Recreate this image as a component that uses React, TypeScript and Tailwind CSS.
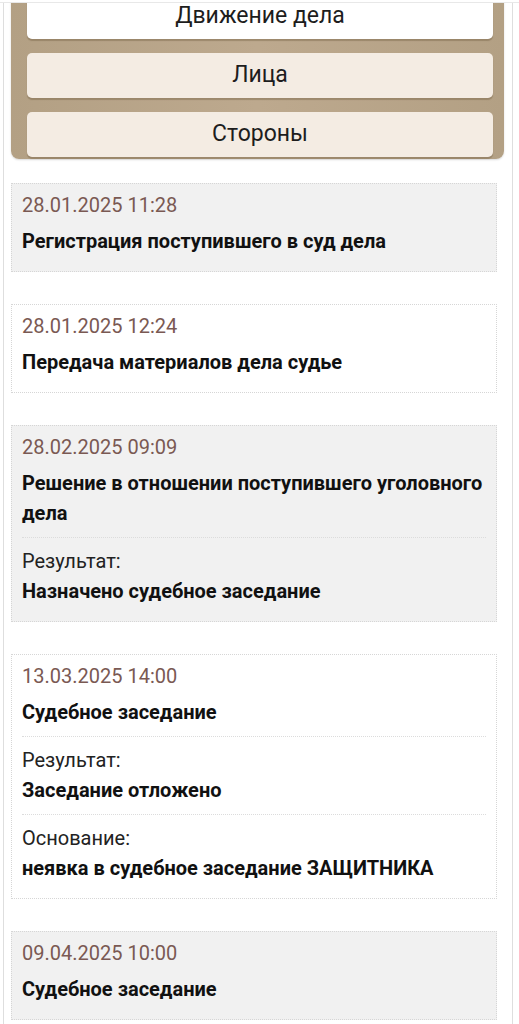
import React from "react";

type Row = { label: string; value: string };
type Event = { date: string; title: string; rows?: Row[] };

const tabs = [
  { name: "Движение дела", active: true },
  { name: "Лица", active: false },
  { name: "Стороны", active: false },
];

const events: Event[] = [
  { date: "28.01.2025 11:28", title: "Регистрация поступившего в суд дела" },
  { date: "28.01.2025 12:24", title: "Передача материалов дела судье" },
  {
    date: "28.02.2025 09:09",
    title: "Решение в отношении поступившего уголовного дела",
    rows: [{ label: "Результат:", value: "Назначено судебное заседание" }],
  },
  {
    date: "13.03.2025 14:00",
    title: "Судебное заседание",
    rows: [
      { label: "Результат:", value: "Заседание отложено" },
      { label: "Основание:", value: "неявка в судебное заседание ЗАЩИТНИКА" },
    ],
  },
  { date: "09.04.2025 10:00", title: "Судебное заседание" },
];

function TabPanel() {
  return (
    <div className="-mt-[14px] rounded-b-[8px] bg-gradient-to-r from-[#b3a084] via-[#bda98e] to-[#b3a084] pt-[5px] pb-[2px] pl-[16px] pr-[11px] shadow-[0_1px_2px_rgba(0,0,0,0.15)]">
      <div className="flex flex-col gap-[14px]">
        {tabs.map((t) => (
          <div
            key={t.name}
            className={
              t.active
                ? "flex h-[45px] items-center justify-center rounded-[5px] bg-white text-[23px] text-[#1d1d1d] shadow-[0_2px_1px_rgba(120,100,70,0.45)]"
                : "flex h-[45px] items-center justify-center rounded-[5px] bg-[#f4ece3] text-[23px] text-[#1d1d1d] shadow-[0_2px_1px_rgba(120,100,70,0.45)]"
            }
          >
            {t.name}
          </div>
        ))}
      </div>
    </div>
  );
}

function EventCard({ ev, shaded }: { ev: Event; shaded: boolean }) {
  return (
    <div
      className={
        shaded
          ? "border border-dotted border-[#d6d6d6] bg-[#f1f1f1] px-[10px] pt-[8px] pb-[15px]"
          : "border border-dotted border-[#d6d6d6] bg-white px-[10px] pt-[8px] pb-[15px]"
      }
    >
      <div className="text-[20px] leading-[26px] text-[#7a5953]">{ev.date}</div>
      <div className="mt-[8px] text-[20px] font-bold leading-[30px] text-[#111]">{ev.title}</div>
      {ev.rows?.map((r) => (
        <div key={r.label} className="mt-[9px] border-t border-dotted border-[#dcdcdc] pt-[8px]">
          <div className="text-[20px] leading-[30px] text-[#222]">{r.label}</div>
          <div className="text-[20px] font-bold leading-[30px] text-[#111]">{r.value}</div>
        </div>
      ))}
    </div>
  );
}

export default function App() {
  return (
    <div className="min-h-[1024px] bg-white font-['Roboto','Noto_Sans',sans-serif]">
      <div className="h-[3px] border-b border-[#e8e8e8]" />
      <div className="ml-[3px] mr-[6px] min-h-[1021px] overflow-hidden border-x border-[#dedede] pl-[7px] pr-[8px]">
        <TabPanel />
        <div className="mt-[24px] mr-[7px] flex flex-col gap-[32px] pb-[8px]">
          {events.map((ev, i) => (
            <EventCard key={ev.date} ev={ev} shaded={i % 2 === 0} />
          ))}
        </div>
      </div>
    </div>
  );
}
